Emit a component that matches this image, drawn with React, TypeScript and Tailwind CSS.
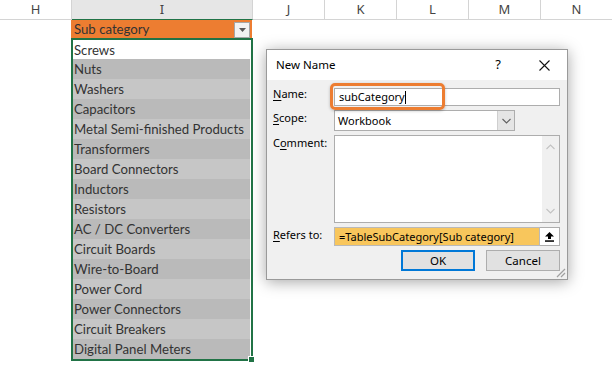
import React from 'react';

const items = [
  'Screws',
  'Nuts',
  'Washers',
  'Capacitors',
  'Metal Semi-finished Products',
  'Transformers',
  'Board Connectors',
  'Inductors',
  'Resistors',
  'AC / DC Converters',
  'Circuit Boards',
  'Wire-to-Board',
  'Power Cord',
  'Power Connectors',
  'Circuit Breakers',
  'Digital Panel Meters',
];

function Chevron({ up, color }: { up?: boolean; color: string }) {
  return (
    <svg width="9" height="6" viewBox="0 0 9 6">
      <path d={up ? 'M0.5 5 L4.5 1 L8.5 5' : 'M0.5 1 L4.5 5 L8.5 1'} fill="none" stroke={color} strokeWidth="1.1" />
    </svg>
  );
}

function NewNameDialog() {
  return (
    <div className="absolute left-[266px] top-[49px] w-[302px] h-[231px] flex flex-col border border-[#9a9a9a] bg-[#f0f0f0] shadow-[0_2px_14px_rgba(0,0,0,0.35)] font-['Noto_Sans',sans-serif] text-[11px] text-black">
      <div className="h-[30px] bg-white flex items-center pl-[9px] pr-[17px] text-[11.5px]">
        <span className="flex-1">New Name</span>
        <span className="mr-[38px] text-[13px]">?</span>
        <svg width="11" height="11" viewBox="0 0 11 11">
          <path d="M0.5 0.5 L10.5 10.5 M10.5 0.5 L0.5 10.5" stroke="#111" strokeWidth="1.1" />
        </svg>
      </div>
      <div className="relative flex-1 flex flex-col gap-[4px] pl-[6px] pt-[8px]">
        <div className="flex">
          <div className="w-[61px] leading-[14px] -mt-[1px]">
            <span className="underline underline-offset-2">N</span>ame:
          </div>
          <div className="relative w-[226px] h-[18px] bg-white border border-[#adadad] flex items-center pl-[4px] leading-[16px]">
            subCategory<span className="inline-block w-[1px] h-[13px] bg-black" />
            <div className="absolute left-[-5px] top-[-6px] w-[115px] h-[27px] rounded-[5px] border-[3px] border-[#ed7d31] shadow-[0_1px_3px_rgba(0,0,0,0.25)]" />
          </div>
        </div>
        <div className="flex">
          <div className="w-[61px] leading-[14px] pt-[1px]">
            <span className="underline underline-offset-2">S</span>cope:
          </div>
          <div className="w-[181px] h-[21px] bg-white border border-[#adadad] flex items-center">
            <span className="flex-1 pl-[3px] leading-[16px]">Workbook</span>
            <div className="w-[17px] h-full bg-[#e5e5e5] border-l border-[#cfcfcf] flex items-center justify-center">
              <Chevron color="#606060" />
            </div>
          </div>
        </div>
        <div className="flex">
          <div className="w-[61px] leading-[14px] pt-[1px]">
            C<span className="underline underline-offset-2">o</span>mment:
          </div>
          <div className="w-[226px] h-[88px] bg-white border border-[#adadad] flex justify-end">
            <div className="w-[17px] h-full bg-[#f0f0f0] flex flex-col items-center justify-between py-[8px]">
              <Chevron up color="#c2c2c2" />
              <Chevron color="#c2c2c2" />
            </div>
          </div>
        </div>
        <div className="flex">
          <div className="w-[61px] leading-[14px] pt-[1px]">
            <span className="underline underline-offset-2">R</span>efers to:
          </div>
          <div className="w-[206px] h-[19px] bg-[#f8c65c] border border-[#b9b9b9] flex items-center pl-[4px] leading-[16px]">
            =TableSubCategory[Sub category]
          </div>
          <div className="w-[20px] h-[19px] bg-white border border-[#adadad] border-l-0 flex items-center justify-center">
            <svg width="9" height="10" viewBox="0 0 9 10">
              <polygon points="4.5,0 9,4.5 6,4.5 6,7 3,7 3,4.5 0,4.5" fill="#000" />
              <rect x="0" y="8.3" width="9" height="1.5" fill="#000" />
            </svg>
          </div>
        </div>
        <div className="flex justify-end gap-[11px] w-[287px] text-[11.5px]">
          <div className="w-[74px] h-[21px] bg-[#e1e1e1] border-2 border-[#0078d7] flex items-center justify-center leading-[16px]">OK</div>
          <div className="w-[74px] h-[21px] bg-[#e1e1e1] border border-[#adadad] flex items-center justify-center leading-[16px]">Cancel</div>
        </div>
        <svg className="absolute right-[1px] bottom-[1px]" width="11" height="11" viewBox="0 0 11 11">
          <path d="M10 2 L2 10 M10 6 L6 10" stroke="#a0a0a0" strokeWidth="1.2" />
        </svg>
      </div>
    </div>
  );
}

export default function App() {
  return (
    <div className="relative w-[612px] h-[382px] overflow-hidden bg-white text-[#333] font-['Lato',sans-serif]">
      <div className="flex h-[20px] font-['Noto_Sans',sans-serif] text-[13px] text-[#444] leading-[19px]">
        <div className="w-[72px] border-r border-b border-[#d4d4d4] text-center">H</div>
        <div className="w-[181px] bg-[#e6e6e6] border-r border-[#d4d4d4] border-b border-b-[#217346] text-center">I</div>
        <div className="w-[72px] border-r border-b border-[#d4d4d4] text-center">J</div>
        <div className="w-[72px] border-r border-b border-[#d4d4d4] text-center">K</div>
        <div className="w-[72px] border-r border-b border-[#d4d4d4] text-center">L</div>
        <div className="w-[72px] border-r border-b border-[#d4d4d4] text-center">M</div>
        <div className="flex-1 border-b border-[#d4d4d4] text-center">N</div>
      </div>
      <div className="flex">
        <div className="w-[71px]" />
        <div className="w-[182px] text-[13.2px]">
          <div className="w-[181px] h-[18px] bg-[#ed7d31] flex items-center pl-[3px] pr-[2px] leading-[18px]">
            <span className="flex-1">Sub category</span>
            <div className="w-[16px] h-[16px] mt-[2px] bg-[#f2f2f2] border border-[#a6a6a6] flex items-center justify-center">
              <svg width="7" height="4" viewBox="0 0 7 4">
                <polygon points="0,0 7,0 3.5,4" fill="#595959" />
              </svg>
            </div>
          </div>
          <div className="relative border-2 border-[#217346] pr-[1px]">
            {items.map((item, i) => (
              <div
                key={item}
                className={
                  'pl-[1px] leading-[20px] ' +
                  (i === 0 ? 'h-[19px] bg-white leading-[19px]' : i % 2 === 1 ? 'h-[20px] bg-[#bababa]' : 'h-[20px] bg-[#c6c6c6]')
                }
              >
                {item}
              </div>
            ))}
            <div className="absolute right-[-4px] bottom-[-4px] w-[7px] h-[7px] bg-[#217346] border border-white" />
          </div>
        </div>
      </div>
      <NewNameDialog />
    </div>
  );
}
